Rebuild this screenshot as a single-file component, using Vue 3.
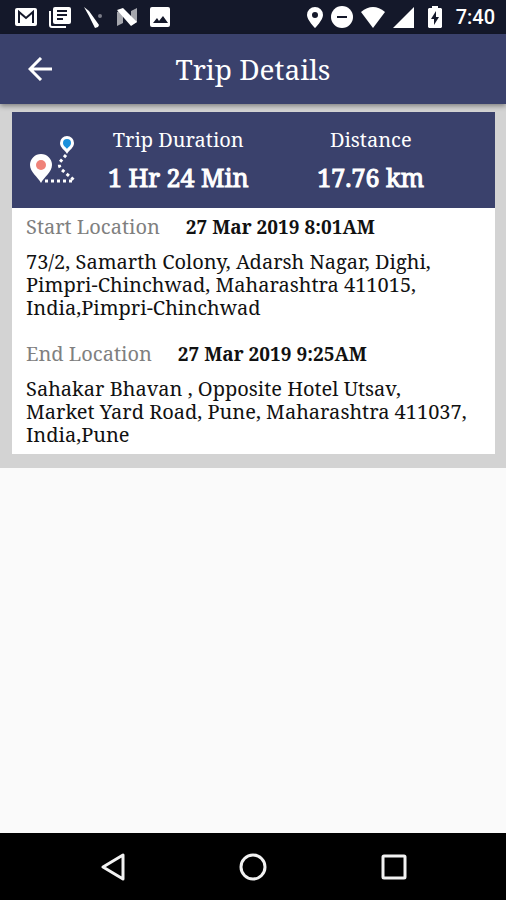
<script setup>
const summary = [
  { label: 'Trip Duration', value: '1 Hr 24 Min' },
  { label: 'Distance', value: '17.76 km' },
]

const stops = [
  {
    label: 'Start Location',
    time: '27 Mar 2019 8:01AM',
    address: '73/2, Samarth Colony, Adarsh Nagar, Dighi,\nPimpri-Chinchwad, Maharashtra 411015,\nIndia,Pimpri-Chinchwad',
  },
  {
    label: 'End Location',
    time: '27 Mar 2019 9:25AM',
    address: 'Sahakar Bhavan , Opposite Hotel Utsav,\nMarket Yard Road, Pune, Maharashtra 411037,\nIndia,Pune',
  },
]
</script>

<template>
  <div class="screen">
    <div class="status">
      <div class="status-left">
        <svg width="22" height="20" viewBox="0 0 22 20">
          <rect x="0" y="1" width="22" height="18" rx="2" fill="#fff" />
          <path d="M4 16V5l7 6 7-6v11" fill="none" stroke="#14182a" stroke-width="2" />
        </svg>
        <svg width="22" height="22" viewBox="0 0 22 22">
          <path d="M1 5v14a2 2 0 0 0 2 2h14" fill="none" stroke="#fff" stroke-width="2" />
          <rect x="4" y="1" width="18" height="17" rx="2" fill="#fff" />
          <path d="M8 5h10M8 9h10M8 13h6" stroke="#14182a" stroke-width="2" />
        </svg>
        <svg width="21" height="22" viewBox="0 0 21 22">
          <path d="M1 1l5 4 10 14-1 2-3 1L6 10z" fill="#fff" />
          <circle cx="17" cy="10" r="2" fill="#7b7d88" />
        </svg>
        <svg width="22" height="20" viewBox="0 0 22 20">
          <path d="M1 5l6-3v14l-6 3zM15 4l6-3v14l-6 3z" fill="#a5a6ad" />
          <path d="M1 3l6-2 14 14-6 4z" fill="#fff" />
        </svg>
        <svg width="20" height="20" viewBox="0 0 20 20">
          <rect x="0" y="0" width="20" height="20" rx="2" fill="#fff" />
          <path d="M3 16l4-5 2 3 4-5 5 7z" fill="#14182a" />
        </svg>
      </div>
      <div class="status-right">
        <svg width="16" height="21" viewBox="0 0 16 21">
          <path fill="#fff" fill-rule="evenodd" d="M8 0a8 8 0 0 0-8 8c0 5 8 13 8 13s8-8 8-13a8 8 0 0 0-8-8zm0 5a3 3 0 1 1 0 6 3 3 0 0 1 0-6z" />
        </svg>
        <svg width="22" height="22" viewBox="0 0 22 22">
          <circle cx="11" cy="11" r="11" fill="#fff" />
          <path d="M6 11h10" stroke="#14182a" stroke-width="2" />
        </svg>
        <svg width="24" height="21" viewBox="0 0 24 21">
          <path d="M0 5Q12-5 24 5L12 21z" fill="#fff" />
        </svg>
        <svg width="21" height="21" viewBox="0 0 21 21"><path d="M21 0v21H0z" fill="#fff" /></svg>
        <svg class="battery" width="14" height="22" viewBox="0 0 14 22">
          <path d="M4 0h6v2h3l1 1v18l-1 1H1l-1-1V3l1-1h3z" fill="#fff" />
          <path d="M8 5l-5 8h3v6l5-8H8z" fill="#14182a" />
        </svg>
        <span class="clock">7:40</span>
      </div>
    </div>

    <header class="bar">
      <button class="back" type="button" aria-label="Back">
        <svg width="24" height="24" viewBox="0 0 24 24">
          <path d="M24 12H2M13 1L2 12l11 11" fill="none" stroke="#fff" stroke-width="3" />
        </svg>
      </button>
      <h1>Trip Details</h1>
    </header>

    <main class="body">
      <section class="card">
        <div class="summary">
          <svg class="route" width="46" height="48" viewBox="0 0 46 48">
            <path d="M11 47C8 41 0 36 0 29a11 11 0 0 1 22 0c0 7-8 12-11 18z" fill="#fff" />
            <circle cx="11" cy="29" r="5" fill="#ef8278" />
            <path d="M37 18c-2-4-7-6-7-11a7 7 0 0 1 14 0c0 5-5 7-7 11z" fill="#fff" />
            <path d="M37 13c-1-2-4-3-4-6a4 4 0 0 1 8 0c0 3-3 4-4 6z" fill="#1b91dc" />
            <path d="M36 19L30 26Q28 30 32 34L44 44" fill="none" stroke="#fff" stroke-width="3" stroke-dasharray="3 3" />
            <path d="M15 45h30" stroke="#fff" stroke-width="3" stroke-dasharray="3 3" />
          </svg>
          <dl class="figures">
            <div v-for="item in summary" :key="item.label" class="figure">
              <dt>{{ item.label }}</dt>
              <dd>{{ item.value }}</dd>
            </div>
          </dl>
        </div>
        <div class="stops">
          <article v-for="stop in stops" :key="stop.label">
            <div class="stop-head">
              <h2>{{ stop.label }}</h2>
              <time>{{ stop.time }}</time>
            </div>
            <address>{{ stop.address }}</address>
          </article>
        </div>
      </section>
    </main>

    <nav class="nav">
      <button type="button" aria-label="Back">
        <svg width="28" height="28" viewBox="0 0 28 28"><path d="M25 2v24L5 14z" fill="none" stroke="#f2f2f2" stroke-width="3" stroke-linejoin="round" /></svg>
      </button>
      <button type="button" aria-label="Home">
        <svg width="28" height="28" viewBox="0 0 28 28"><circle cx="14" cy="14" r="12" fill="none" stroke="#f2f2f2" stroke-width="3" /></svg>
      </button>
      <button type="button" aria-label="Recent apps">
        <svg width="28" height="28" viewBox="0 0 28 28"><rect x="3" y="3" width="22" height="22" rx="1" fill="none" stroke="#f2f2f2" stroke-width="3" /></svg>
      </button>
    </nav>
  </div>
</template>

<style>
body {
  margin: 0;
}
</style>

<style scoped>
.screen {
  display: flex;
  flex-direction: column;
  min-height: 100vh;
  background: #fafafa;
  color: #111;
  font-family: "Noto Serif", "DejaVu Serif Condensed", "DejaVu Serif", serif;
}
h1, h2, dl, dd {
  margin: 0;
}
button {
  display: flex;
  padding: 0;
  border: 0;
  background: none;
}
.status {
  display: flex;
  justify-content: space-between;
  align-items: center;
  height: 34px;
  padding: 0 11px 0 15px;
  background: #14182a;
}
.status-left {
  display: flex;
  align-items: center;
  gap: 12px;
}
.status-right {
  display: flex;
  align-items: center;
  gap: 8px;
}
.battery {
  margin: 0 6px;
}
.clock {
  color: #fff;
  font: 500 20px/24px Roboto, sans-serif;
}
.bar {
  position: relative;
  display: grid;
  grid-template-columns: 1fr auto 1fr;
  align-items: center;
  height: 70px;
  padding: 0 28px;
  background: #3a416c;
  box-shadow: 0 2px 5px rgba(0, 0, 0, 0.4);
}
h1 {
  color: #fff;
  font-size: 28px;
  font-weight: 400;
  line-height: 36px;
}
.body {
  padding: 8px 11px 14px 12px;
  background: #d3d3d3;
}
.card {
  background: #fff;
}
.summary {
  display: flex;
  align-items: center;
  height: 96px;
  padding-left: 18px;
  background: #3a416c;
  color: #fff;
}
.route {
  flex: none;
}
.figures {
  display: grid;
  flex: 1;
  grid-template-columns: 1fr 1fr;
  padding: 0 28px 0 6px;
}
.figure {
  text-align: center;
  white-space: nowrap;
}
dt {
  font-size: 20px;
  line-height: 34px;
}
dd {
  font-size: 25px;
  line-height: 40px;
  -webkit-text-stroke: 1px currentColor;
}
.stops {
  display: grid;
  gap: 20px;
  padding: 4px 14px 8px;
}
.stop-head {
  display: flex;
  gap: 26px;
  line-height: 30px;
}
h2 {
  color: #808080;
  font-size: 20px;
  font-weight: 400;
}
time {
  font-size: 19px;
  font-weight: 700;
}
address {
  padding-top: 8px;
  font-size: 20px;
  font-style: normal;
  line-height: 23px;
  white-space: pre-line;
}
.nav {
  display: flex;
  justify-content: space-between;
  align-items: center;
  height: 67px;
  margin-top: auto;
  padding: 0 98px;
  background: #000;
}
</style>
